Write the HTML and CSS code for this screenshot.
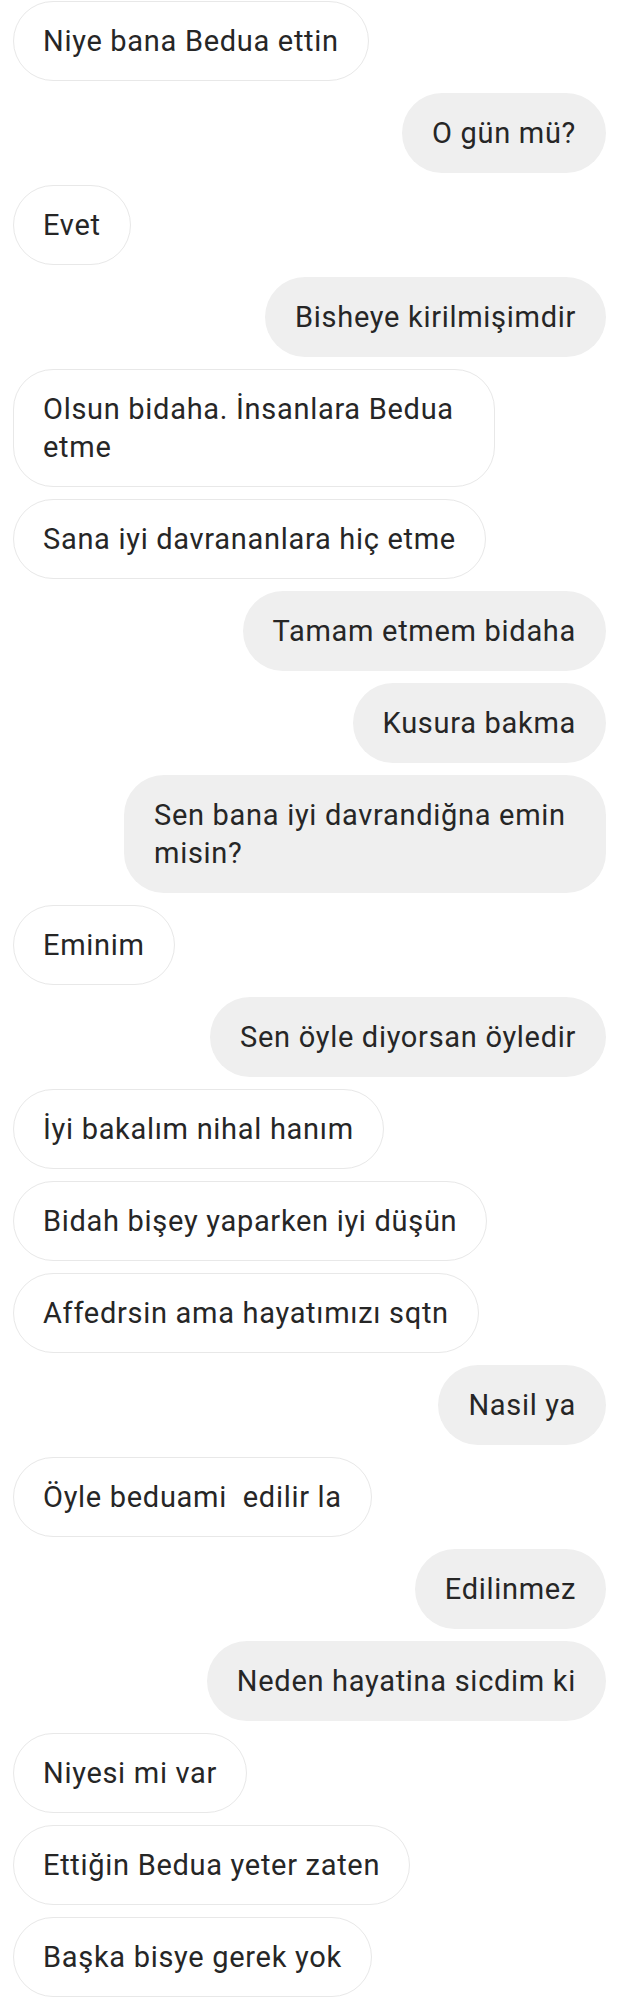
FILE: index.html
```html
<!DOCTYPE html>
<html>

<head>
    <meta charset="utf-8">
    <title>Sohbet</title>
    <link rel="stylesheet" href="styles.css">
</head>

<body>
    <div class="chat">
        <div class="msg in">Niye bana Bedua ettin</div>
        <div class="msg out">O gün mü?</div>
        <div class="msg in">Evet</div>
        <div class="msg out">Bisheye kirilmişimdir</div>
        <div class="msg in">Olsun bidaha. İnsanlara Bedua etme</div>
        <div class="msg in">Sana iyi davrananlara hiç etme</div>
        <div class="msg out">Tamam etmem bidaha</div>
        <div class="msg out">Kusura bakma</div>
        <div class="msg out">Sen bana iyi davrandiğna emin misin?</div>
        <div class="msg in">Eminim</div>
        <div class="msg out">Sen öyle diyorsan öyledir</div>
        <div class="msg in">İyi bakalım nihal hanım</div>
        <div class="msg in">Bidah bişey yaparken iyi düşün</div>
        <div class="msg in">Affedrsin ama hayatımızı sqtn</div>
        <div class="msg out">Nasil ya</div>
        <div class="msg in">Öyle beduami&nbsp; edilir la</div>
        <div class="msg out">Edilinmez</div>
        <div class="msg out">Neden hayatina sicdim ki</div>
        <div class="msg in">Niyesi mi var</div>
        <div class="msg in">Ettiğin Bedua yeter zaten</div>
        <div class="msg in">Başka bisye gerek yok</div>
    </div>
</body>

</html>
```

FILE: styles.css
```css
body {
    margin: 0;
    background-color: #fff;
    font-family: Roboto, "Noto Sans", Arial, sans-serif;
    color: #262626;
}

.chat {
    display: flex;
    flex-direction: column;
    align-items: flex-start;
    gap: 12px;
    padding: 1px 26px 0 13px;
}

.msg {
    box-sizing: border-box;
    max-width: 482px;
    padding: 21px 30px;
    border-radius: 40px;
    font-size: 29px;
    letter-spacing: 0.7px;
    line-height: 38px;
}

.in {
    background-color: #fff;
    border: 1px solid #e8e8e8;
    padding: 20px 29px;
}

.out {
    align-self: flex-end;
    background-color: #efefef;
}
```
